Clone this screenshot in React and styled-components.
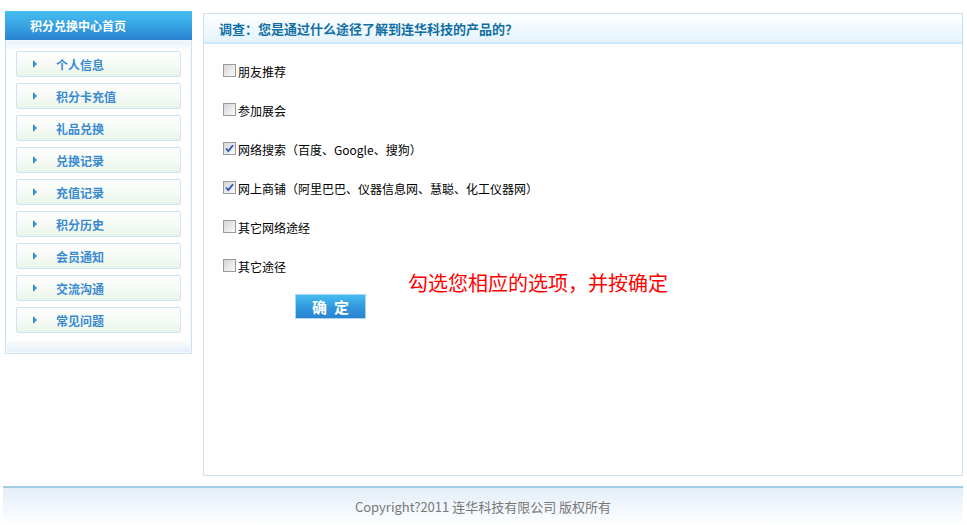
import React from "react";
import styled, { createGlobalStyle } from "styled-components";

const menu = [
  "个人信息",
  "积分卡充值",
  "礼品兑换",
  "兑换记录",
  "充值记录",
  "积分历史",
  "会员通知",
  "交流沟通",
  "常见问题",
];

const options = [
  { label: "朋友推荐", checked: false },
  { label: "参加展会", checked: false },
  { label: "网络搜索（百度、Google、搜狗）", checked: true },
  { label: "网上商铺（阿里巴巴、仪器信息网、慧聪、化工仪器网）", checked: true },
  { label: "其它网络途经", checked: false },
  { label: "其它途径", checked: false },
];

function Check({ checked }) {
  return (
    <Box>
      {checked && (
        <svg width="9" height="9" viewBox="0 0 9 9">
          <path d="M1 4.5 L3.3 7 L8 1.2" fill="none" stroke="#2b55b8" strokeWidth="1.8" />
        </svg>
      )}
    </Box>
  );
}

function App() {
  return (
    <>
      <GlobalStyle />
      <Page>
        <Main>
          <Sidebar>
            <SideHead>积分兑换中心首页</SideHead>
            <SideBody>
              {menu.map((m) => (
                <MenuItem key={m}>
                  <Arrow />
                  {m}
                </MenuItem>
              ))}
            </SideBody>
          </Sidebar>
          <Panel>
            <PanelHead>调查：您是通过什么途径了解到连华科技的产品的？</PanelHead>
            <PanelBody>
              {options.map((o) => (
                <Option key={o.label}>
                  <Check checked={o.checked} />
                  {o.label}
                </Option>
              ))}
              <Actions>
                <Button>确定</Button>
                <Hint>勾选您相应的选项，并按确定</Hint>
              </Actions>
            </PanelBody>
          </Panel>
        </Main>
        <Footer>Copyright?2011 连华科技有限公司 版权所有</Footer>
      </Page>
    </>
  );
}

export default App;

const GlobalStyle = createGlobalStyle`
  body {
    margin: 0;
    background: #fff;
    font-family: "Noto Sans CJK SC", "Noto Sans", sans-serif;
    font-size: 12px;
  }
`;

const Page = styled.div`
  width: 960px;
  margin: 0 0 0 3px;
  padding-top: 11px;
`;

const Main = styled.div`
  display: flex;
  align-items: flex-start;
`;

const Sidebar = styled.div`
  width: 187px;
  margin-left: 2px;
`;

const SideHead = styled.div`
  height: 29px;
  line-height: 30px;
  padding-left: 25px;
  color: #fff;
  font-weight: bold;
  font-size: 12px;
  background: linear-gradient(180deg, #46bff0 0%, #37a3e3 50%, #2b82cf 100%);
`;

const SideBody = styled.div`
  border: 1px solid #c9e2f5;
  border-top: none;
  padding: 11px 10px 20px 10px;
  display: flex;
  flex-direction: column;
  gap: 6px;
  background:
    linear-gradient(180deg, #e6f2fa 0px, #fff 12px, #fff calc(100% - 14px), #e3eef7 100%);
  box-shadow: inset 0 0 0 1px #f4f9fd;
`;

const MenuItem = styled.div`
  height: 24px;
  border: 1px solid #cfe5f3;
  border-radius: 2px;
  display: flex;
  align-items: center;
  padding-left: 16px;
  color: #3a8ad2;
  font-weight: bold;
  font-size: 12px;
  background: linear-gradient(180deg, #ffffff 0%, #f6fbf6 50%, #e9f5e9 100%);
`;

const Arrow = styled.span`
  width: 0;
  height: 0;
  border-top: 4px solid transparent;
  border-bottom: 4px solid transparent;
  border-left: 4px solid #3d8cd4;
  margin-right: 19px;
`;

const Panel = styled.div`
  width: 758px;
  margin-left: 11px;
  margin-top: 2px;
  height: 461px;
  border: 1px solid #c9e3f5;
  background: #fff;
`;

const PanelHead = styled.div`
  height: 28px;
  line-height: 30px;
  padding-left: 15px;
  border-bottom: 2px solid #cde7fa;
  color: #0f6fa5;
  font-weight: bold;
  font-size: 13px;
  background: linear-gradient(180deg, #ffffff 0%, #e4f3fd 100%);
`;

const PanelBody = styled.div`
  padding: 8px 0 0 19px;
`;

const Option = styled.label`
  height: 39px;
  display: flex;
  align-items: center;
  color: #000;
  font-size: 12px;
`;

const Box = styled.span`
  box-sizing: border-box;
  width: 13px;
  height: 13px;
  margin-right: 2px;
  margin-bottom: 2px;
  border: 1px solid #9a9a9a;
  background: linear-gradient(135deg, #d4d4d4 0%, #ececec 60%, #fafafa 100%);
  display: flex;
  align-items: center;
  justify-content: center;
`;

const Actions = styled.div`
  display: flex;
  align-items: flex-start;
  margin-top: 8px;
  padding-left: 72px;
`;

const Button = styled.button`
  width: 71px;
  height: 25px;
  border: 1px solid #a9d6f5;
  padding: 0;
  color: #fff;
  font-family: "Noto Sans CJK SC", sans-serif;
  font-weight: bold;
  font-size: 15px;
  letter-spacing: 7px;
  text-indent: 7px;
  background: linear-gradient(180deg, #45bdf0 0%, #2f93da 60%, #2a84cf 100%);
  cursor: pointer;
`;

const Hint = styled.div`
  margin-left: 42px;
  margin-top: -22px;
  color: #ff0000;
  font-size: 20px;
  line-height: 22px;
`;

const Footer = styled.div`
  margin-top: 10px;
  height: 38px;
  border-top: 2px solid #a2cbe4;
  text-align: center;
  line-height: 38px;
  color: #777;
  font-size: 13px;
  background: linear-gradient(180deg, #e3eef8 0%, #ffffff 100%);
`;
